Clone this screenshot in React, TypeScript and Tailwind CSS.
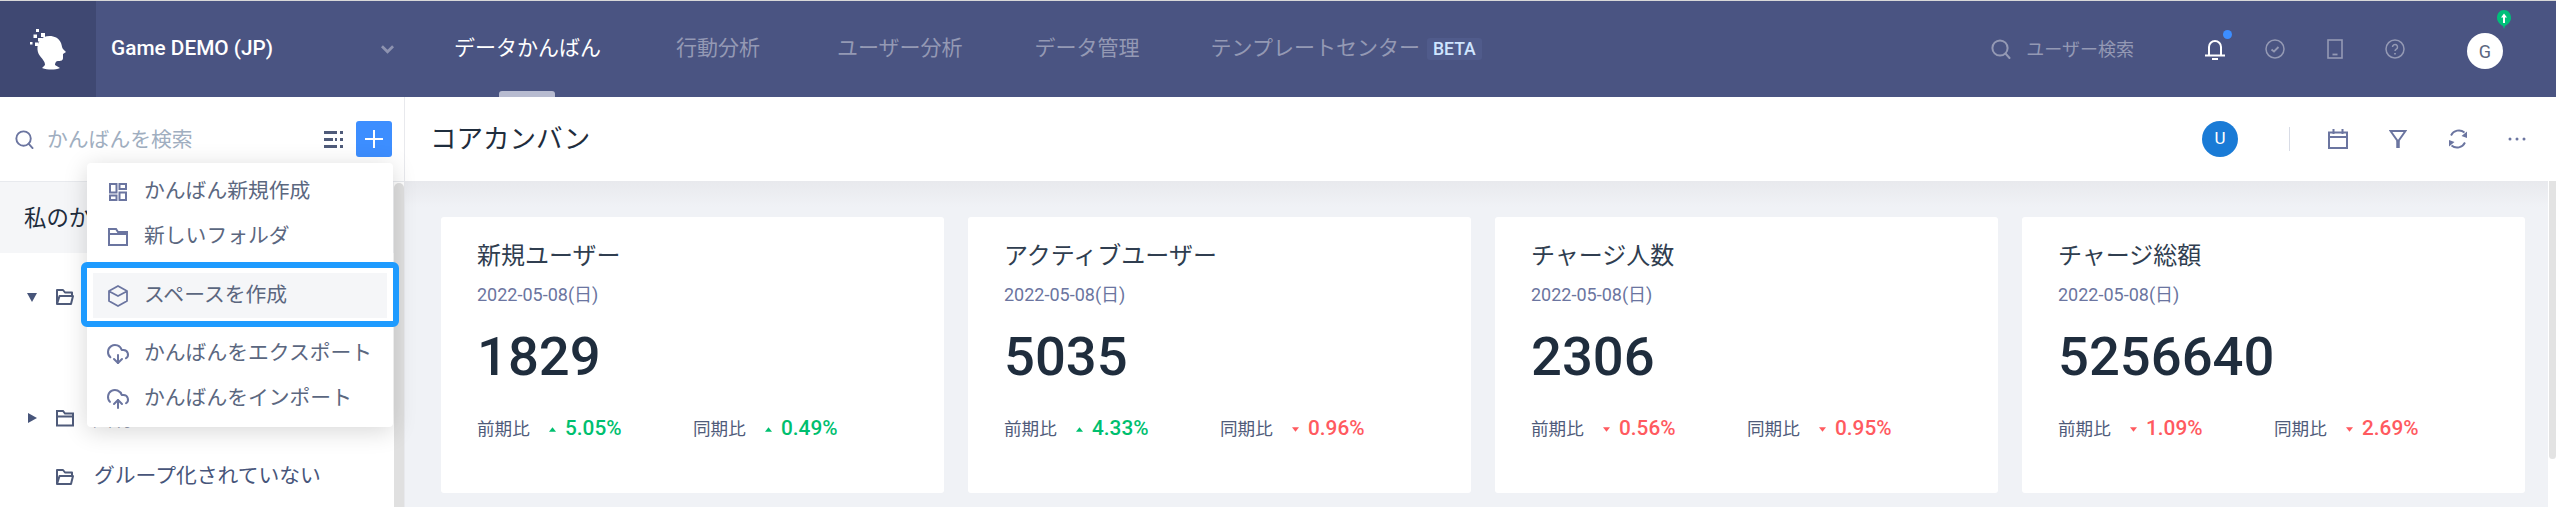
import React from 'react';
import { CloudDownload, CloudUpload } from 'lucide-react';

const font = { fontFamily: 'Roboto, "Noto Sans CJK JP", sans-serif' };

const navItems = [
  { label: '行動分析', className: 'ml-[75px]' },
  { label: 'ユーザー分析', className: 'ml-[77px]' },
  { label: 'データ管理', className: 'ml-[72px]' },
  { label: 'テンプレートセンター', className: 'ml-[71px]' },
];

const cards = [
  { title: '新規ユーザー', value: '1829', prev: '5.05%', prevUp: true, same: '0.49%', sameUp: true },
  { title: 'アクティブユーザー', value: '5035', prev: '4.33%', prevUp: true, same: '0.96%', sameUp: false },
  { title: 'チャージ人数', value: '2306', prev: '0.56%', prevUp: false, same: '0.95%', sameUp: false },
  { title: 'チャージ総額', value: '5256640', prev: '1.09%', prevUp: false, same: '2.69%', sameUp: false },
];

function SearchIcon({ className }: { className: string }) {
  return (
    <svg viewBox="0 0 20 20" fill="none" stroke="currentColor" strokeWidth="2" className={className}>
      <circle cx="9" cy="9" r="7.6" />
      <path d="M14.5 14.5 L18.5 19" strokeLinecap="round" />
    </svg>
  );
}

function FolderIcon({ open }: { open?: boolean }) {
  return (
    <svg viewBox="0 0 18 18" fill="none" stroke="#4f5b7a" strokeWidth="2" className="w-[18px] h-[18px] shrink-0">
      {open ? (
        <path d="M1 16 V2 H7 L9 4.5 H16 V7.5 M1 16 L3.5 8 H17 L15 16 Z" strokeLinejoin="round" />
      ) : (
        <path d="M1 2 H7 L9 4.5 H17 V16.5 H1 Z M1 7.5 H17" />
      )}
    </svg>
  );
}

function Caret({ down }: { down?: boolean }) {
  return (
    <svg viewBox="0 0 10 10" className="w-[10px] h-[10px] shrink-0" fill="#47557a">
      {down ? <path d="M0 1 H10 L5 10 Z" /> : <path d="M1 0 L10 5 L1 10 Z" />}
    </svg>
  );
}

function Trend({ up }: { up: boolean }) {
  return (
    <svg viewBox="0 0 8 5" className="w-[7px] h-[5px] shrink-0" fill={up ? '#00bf6f' : '#ff5a5f'}>
      {up ? <path d="M4 0 L8 5 H0 Z" /> : <path d="M0 0 H8 L4 5 Z" />}
    </svg>
  );
}

function MenuItem({ icon, label, active }: { icon: React.ReactNode; label: string; active?: boolean }) {
  return (
    <div className={`mx-[6px] h-[45px] flex items-center pl-[11px] text-[20.8px] text-[#5b677f] ${active ? 'bg-[#f5f6f8]' : ''}`}>
      <span className="w-[27px] flex justify-center shrink-0 text-[#6b75a0]">{icon}</span>
      <span className="ml-[13px] whitespace-nowrap">{label}</span>
    </div>
  );
}

function Compare({ label, value, up }: { label: string; value: string; up: boolean }) {
  return (
    <div className="w-[216px] flex items-center h-[28px]">
      <span className="text-[17.6px] text-[#4f5b7a] w-[54px] whitespace-nowrap">{label}</span>
      <span className="ml-[17px] w-[8px] flex justify-center"><Trend up={up} /></span>
      <span className={`ml-[9px] text-[20.8px] font-medium ${up ? 'text-[#00bf6f]' : 'text-[#ff5a5f]'}`}>{value}</span>
    </div>
  );
}

export default function App() {
  return (
    <div className="w-[2556px] h-[507px] overflow-hidden flex flex-col bg-white" style={font}>
      <header className="h-[97px] shrink-0 border-t border-[#d8d8d8] bg-[#4a5482] flex items-stretch">
        <div className="w-[96px] shrink-0 bg-[#3f4872] flex items-center justify-center">
          <svg viewBox="30 28 36 41" className="w-[36px] h-[41px]" fill="#fff">
            <path d="M44 36 C50 34 58 35 61 42 C62 45 62 47 63 48 L66 51 L63 53 L63 57 C63 60 60 60 58 60 C56 60 55 62 55 64 L60 67 C55 69 48 69 42 67 L45 64 C45 60 42 58 40 55 C36 50 37 42 41 38 Z" />
            <rect x="36" y="28" width="3" height="3" />
            <rect x="33.500" y="33.500" width="3.500" height="3.500" />
            <rect x="41" y="32" width="4" height="4" />
            <rect x="38" y="37" width="4" height="3.500" />
            <rect x="30" y="41" width="2.500" height="2.500" />
            <rect x="35" y="41.500" width="3.500" height="3.500" />
          </svg>
        </div>
        <div className="w-[358px] shrink-0 flex items-center pl-[15px] relative">
          <span className="text-[20.8px] font-medium text-white whitespace-nowrap">Game DEMO (JP)</span>
          <svg viewBox="0 0 14 9" className="absolute left-[285px] top-[44px] w-[13px] h-[9px]" fill="none" stroke="#8e93b0" strokeWidth="3">
            <path d="M1 1 L7 7 L13 1" />
          </svg>
        </div>
        <nav className="flex items-center">
          <div className="relative h-full flex items-center text-[21px] text-white whitespace-nowrap">
            データかんばん
            <span className="absolute bottom-0 left-[45px] w-[56px] h-[6px] rounded-t-[3px] bg-[#b7bbd0]" />
          </div>
          {navItems.map(item => (
            <span key={item.label} className={`${item.className} text-[21px] text-[#9499b4] whitespace-nowrap`}>
              {item.label}
            </span>
          ))}
          <span className="ml-[7px] h-[22px] px-[6px] flex items-center rounded-[3px] bg-[#505b8b] text-[17.6px] font-medium text-[#cfe5ff]">BETA</span>
        </nav>
        <div className="ml-auto flex items-center pr-[53px] text-[#9499b4]">
          <SearchIcon className="w-[20px] h-[20px]" />
          <span className="ml-[15px] text-[18px] whitespace-nowrap">ユーザー検索</span>
          <div className="relative ml-[71px] w-[20px] h-[21px]">
            <svg viewBox="0 0 20 21" fill="none" stroke="#fff" strokeWidth="2" className="w-[20px] h-[21px]">
              <path d="M4 16 V8 a6 6 0 0 1 12 0 V16 M0 16.500 H20 M7 20 H13" />
            </svg>
            <span className="absolute -top-[9px] left-[18px] w-[9px] h-[9px] rounded-full bg-[#3d8eff]" />
          </div>
          <svg viewBox="0 0 20 20" fill="none" stroke="currentColor" strokeWidth="1.500" className="ml-[40px] w-[20px] h-[20px]">
            <circle cx="10" cy="10" r="9" />
            <path d="M6.500 10.500 L9 12.500 L13.500 8" strokeWidth="1.800" />
          </svg>
          <svg viewBox="0 0 16 20" fill="none" stroke="currentColor" strokeWidth="1.600" className="ml-[42px] w-[16px] h-[20px]">
            <rect x="1" y="1" width="14" height="18" />
            <path d="M5.500 15.500 H10.500" strokeWidth="1.800" />
          </svg>
          <svg viewBox="0 0 20 20" fill="none" stroke="currentColor" strokeWidth="1.500" className="ml-[42px] w-[20px] h-[20px]">
            <circle cx="10" cy="10" r="9" />
            <path d="M7.500 8 a2.500 2.500 0 1 1 3.800 2.100 c-.8.500-1.300 1-1.300 2" />
            <path d="M10 14 V15.500" strokeWidth="1.800" />
          </svg>
          <div className="relative ml-[62px] w-[36px] h-[36px] mt-[4px] rounded-full bg-white flex items-center justify-center text-[18px] text-[#5b677f]">
            G
            <svg viewBox="0 0 14 19" className="absolute -top-[23px] left-[30px] w-[14px] h-[19px]">
              <path d="M7 0 C11 0 14 3 14 8 C14 12 10 15 8 16 L7 19 L6 16 C4 15 0 12 0 8 C0 3 3 0 7 0 Z" fill="#00bf7a" />
              <path d="M7 3.500 L10 7.500 H8 V13 H6 V7.500 H4 Z" fill="#fff" />
            </svg>
          </div>
        </div>
      </header>

      <div className="flex-1 flex min-h-0">
        <aside className="relative w-[405px] shrink-0 border-r border-[#e8e9ed] flex flex-col">
          <div className="h-[85px] shrink-0 flex items-center border-b border-[#e8eaee] pl-[15px]">
            <SearchIcon className="w-[19px] h-[19px] text-[#6b75a0]" />
            <span className="ml-[13px] pt-[4px] text-[20.8px] text-[#a0aec0] whitespace-nowrap">かんばんを検索</span>
            <svg viewBox="0 0 19 17" className="ml-[131px] w-[19px] h-[17px]" fill="#4f5b7a">
              <rect x="0" y="0" width="13" height="3" />
              <rect x="16" y="0" width="3" height="3" />
              <rect x="0" y="7" width="9" height="3" />
              <rect x="11" y="7" width="2" height="3" />
              <rect x="16" y="7" width="3" height="3" />
              <rect x="0" y="14" width="13" height="3" />
              <rect x="16" y="14" width="3" height="3" />
            </svg>
            <button className="ml-[13px] w-[36px] h-[36px] rounded-[3px] bg-[#3d8eff] flex items-center justify-center">
              <svg viewBox="0 0 18 18" className="w-[18px] h-[18px]" stroke="#fff" strokeWidth="2">
                <path d="M9 0 V18 M0 9 H18" />
              </svg>
            </button>
          </div>
          <div className="flex-1 min-h-0 flex">
            <div className="w-[394px] shrink-0">
              <div className="h-[71px] bg-[#f5f6f8] flex items-center pl-[24px] pt-[2px] text-[22.4px] text-[#1f2d3d] whitespace-nowrap">
                私のかんばん
              </div>
              <div className="pt-[17px] text-[20.8px] text-[#47557a]">
                <div className="h-[54px] flex items-center pl-[27px]">
                  <Caret down />
                  <span className="ml-[19px]"><FolderIcon open /></span>
                </div>
                <div className="mt-[67px] h-[54px] flex items-center pl-[27px]">
                  <Caret />
                  <span className="ml-[19px]"><FolderIcon /></span>
                  <span className="ml-[18px] pt-[4px] whitespace-nowrap">共有スペース</span>
                </div>
                <div className="mt-[5px] h-[54px] flex items-center pl-[56px]">
                  <FolderIcon open />
                  <span className="ml-[20px] whitespace-nowrap">グループ化されていない</span>
                </div>
              </div>
            </div>
            <div className="w-[10px] shrink-0 bg-[#e0e0e0] rounded-t-[5px] mt-[1px]" />
          </div>

          <div className="absolute left-[87px] top-[66px] w-[306px] h-[264px] rounded-[4px] bg-white shadow-[0_4px_24px_rgba(0,0,0,0.16)] pt-[6px]">
            <MenuItem
              label="かんばん新規作成"
              icon={
                <svg viewBox="0 0 18 18" fill="none" stroke="currentColor" strokeWidth="2" className="w-[18px] h-[18px]">
                  <path d="M1 1 H7.500 V9.500 H1 Z M10.500 1 H17 V6 H10.500 Z M1 12.500 H7.500 V17 H1 Z M10.500 9.500 H17 V17 H10.500 Z" />
                </svg>
              }
            />
            <MenuItem
              label="新しいフォルダ"
              icon={
                <svg viewBox="0 0 20 18" fill="none" stroke="currentColor" strokeWidth="2" className="w-[20px] h-[18px]">
                  <path d="M1 1 H8 L10 4 H19 V17 H1 Z M1 6 H19" />
                </svg>
              }
            />
            <div className="mt-[14px]">
              <MenuItem
                active
                label="スペースを作成"
                icon={
                  <svg viewBox="0 0 20 22" fill="none" stroke="currentColor" strokeWidth="1.800" className="w-[20px] h-[22px]">
                    <path d="M10 1 L19 6 V16 L10 21 L1 16 V6 Z M1.500 6.500 L10 11 L18.500 6.500" strokeLinejoin="round" />
                  </svg>
                }
              />
            </div>
            <div className="mt-[13px]">
              <MenuItem label="かんばんをエクスポート" icon={<CloudDownload className="w-[24px] h-[24px]" />} />
              <MenuItem label="かんばんをインポート" icon={<CloudUpload className="w-[24px] h-[24px]" />} />
            </div>
            <div className="absolute -left-[6px] top-[99px] w-[318px] h-[65px] rounded-[6px] border-[6px] border-[#1e9bff]" />
          </div>
        </aside>

        <main className="flex-1 min-w-0 flex flex-col bg-[#f0f2f6]">
          <div className="h-[84px] shrink-0 bg-white flex items-center pl-[25px] pr-[30px] text-[#6b75a0]">
            <h1 className="text-[26.5px] font-normal text-[#1f2d3d] whitespace-nowrap">コアカンバン</h1>
            <div className="ml-auto w-[36px] h-[36px] rounded-full bg-[#1a7bd6] flex items-center justify-center text-[17px] text-white">U</div>
            <div className="ml-[51px] w-px h-[24px] bg-[#d8dce6]" />
            <svg viewBox="0 0 20 20" fill="none" stroke="currentColor" strokeWidth="2" className="ml-[38px] w-[20px] h-[20px]">
              <path d="M1 3.500 H19 V19 H1 Z M1 8 H19 M5.500 0 V5 M14.500 0 V5" />
            </svg>
            <svg viewBox="0 0 18 19" fill="none" stroke="currentColor" strokeWidth="2" className="ml-[41px] w-[18px] h-[19px]">
              <path d="M1.500 1 H16.500 L9 11.500 Z" />
              <path d="M9 11 V18" strokeWidth="3.500" />
            </svg>
            <svg viewBox="0 0 20 20" fill="none" stroke="currentColor" strokeWidth="1.800" className="ml-[41px] w-[20px] h-[20px]">
              <path d="M3 6.500 A8.800 8.800 0 0 1 16.500 3.500 M17 13.500 A8.800 8.800 0 0 1 3.500 16.500" />
              <path d="M19 2.500 L19 9 L13.500 7 Z M1 17.500 L1 11 L6.500 13 Z" fill="currentColor" stroke="none" />
            </svg>
            <svg viewBox="0 0 18 4" fill="currentColor" className="ml-[40px] w-[18px] h-[4px]">
              <circle cx="2" cy="2" r="1.500" />
              <circle cx="9" cy="2" r="1.500" />
              <circle cx="16" cy="2" r="1.500" />
            </svg>
          </div>
          <div className="flex-1 flex min-h-0">
            <div className="flex-1 min-w-0 pl-[36px] pr-[23px] pt-[36px] bg-[linear-gradient(#e8e9ed,#f0f2f6_26px)]">
              <div className="grid grid-cols-4 gap-[24px]">
                {cards.map(card => (
                  <div key={card.title} className="h-[276px] rounded-[3px] bg-white pl-[36px] pt-[21px]">
                    <div className="h-[36px] leading-[36px] text-[24px] text-[#303e50] whitespace-nowrap">{card.title}</div>
                    <div className="mt-[7px] h-[28px] leading-[28px] text-[18px] text-[#6b75a0]">2022-05-08(日)</div>
                    <div className="mt-[16px] h-[64px] leading-[64px] text-[54.4px] font-medium text-[#1f2d3d]">{card.value}</div>
                    <div className="mt-[26px] flex">
                      <Compare label="前期比" value={card.prev} up={card.prevUp} />
                      <Compare label="同期比" value={card.same} up={card.sameUp} />
                    </div>
                  </div>
                ))}
              </div>
            </div>
            <div className="w-[8px] shrink-0 bg-white">
              <div className="ml-[1px] h-[278px] rounded-b-[5px] bg-[#e3e3e3]" />
            </div>
          </div>
        </main>
      </div>
    </div>
  );
}
